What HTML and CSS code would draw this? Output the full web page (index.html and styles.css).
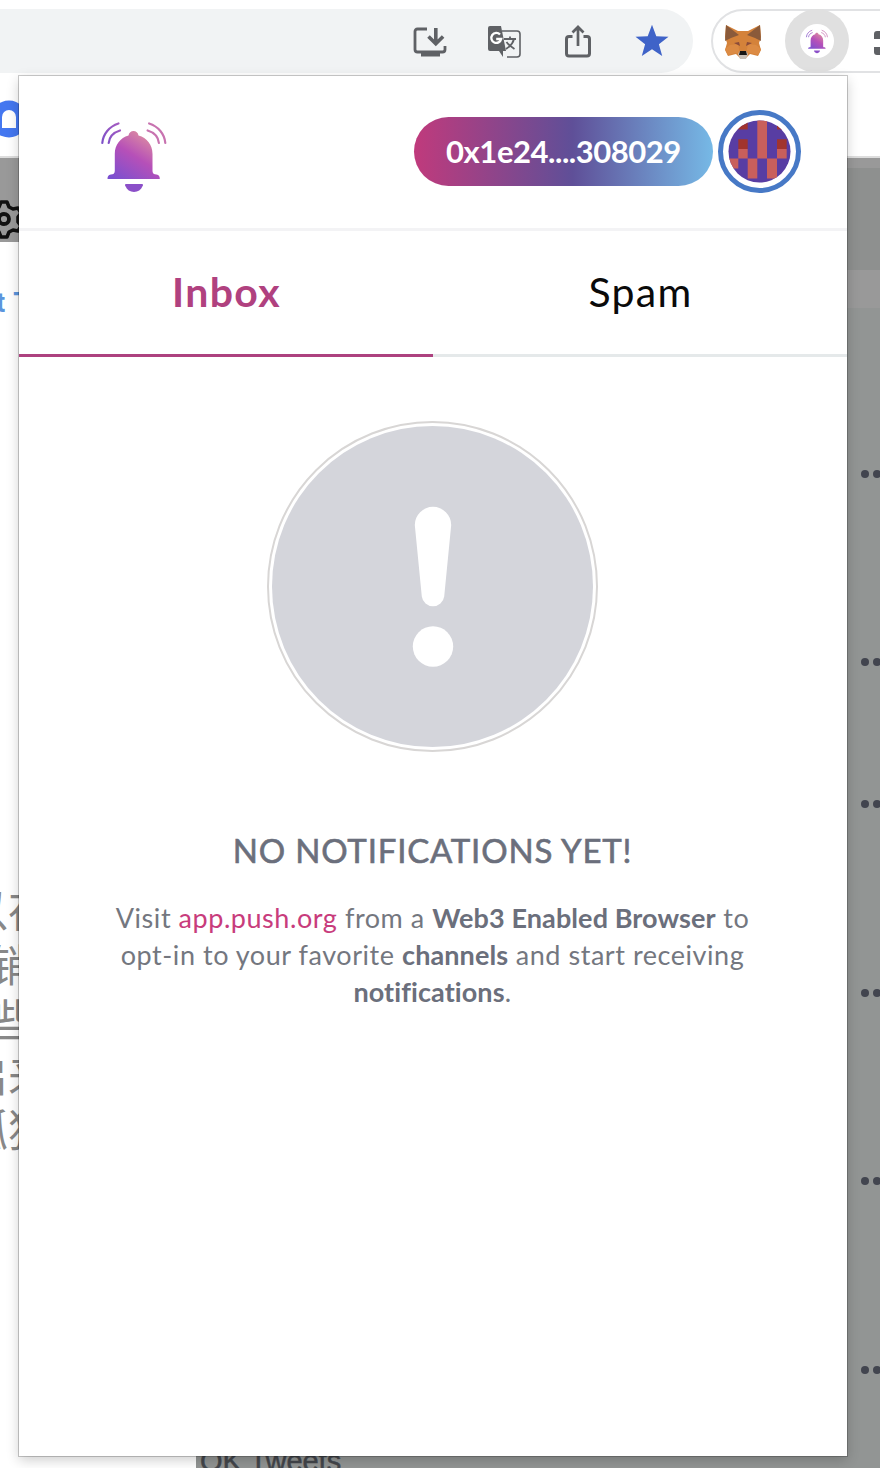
FILE: index.html
```html
<!DOCTYPE html>
<html lang="en">
  <head>
    <meta charset="utf-8">
    <title>Push notifications</title>
    <link rel="stylesheet" href="styles.css">
  </head>
  <body>
    <!-- shared drawings -->
    <svg class="defs" width="0" height="0">
      <defs>
        <linearGradient id="bell-fill" x1="35" y1="80" x2="68" y2="28" gradientUnits="userSpaceOnUse">
          <stop offset="0" stop-color="#7a4fd0"/>
          <stop offset=".5" stop-color="#b650b8"/>
          <stop offset="1" stop-color="#e59a9c"/>
        </linearGradient>
        <linearGradient id="bell-left" x1="20" y1="40" x2="40" y2="22" gradientUnits="userSpaceOnUse">
          <stop offset="0" stop-color="#7d50c8"/>
          <stop offset="1" stop-color="#a75cc0"/>
        </linearGradient>
        <symbol id="bell" viewBox="18 20 72 74">
          <path fill="url(#bell-fill)" d="M48.500 35.500C49 32.500 51 31 53.500 31s4.500 1.500 5 4.500C67 38 72.500 44.500 72.500 54v17c0 2.500 1.500 3.500 4 3.500 2.500.500 3.300 2 3.300 4.500H27.500c0-2.500.8-4 3.300-4.500 2.500 0 4-1 4-3.500V54c0-9.500 5.500-16 13.700-18.500z"/>
          <path fill="#8b4fc8" d="M46 84h16c1 0 1.200.8.8 1.800C61 90 58 92 54 92s-7-2-8.800-6.200c-.4-1-.2-1.800.8-1.800z"/>
          <g fill="none" stroke-width="2.200" stroke-linecap="round">
            <path stroke="url(#bell-left)" d="M22.300 43c.7-9 7-16.500 16.200-19.500M28.700 43c.6-6 4.800-10.500 11.300-12.500"/>
            <path stroke="#c873b0" d="M85.300 43c-.7-9-7-16.500-16.200-19.500M78.900 43c-.6-6-4.800-10.500-11.300-12.500"/>
          </g>
        </symbol>
      </defs>
    </svg>

    <div class="toolbar">
      <div class="address">
        <svg class="icon" viewBox="0 0 36 36">
          <path d="M15 5H5.500Q3 5 3 7.500v18Q3 28 5.500 28h25q2.500 0 2.500-2.500V22" fill="none" stroke="#5f6165" stroke-width="2.800"/>
          <path d="M9 28h19v4.500H9z" fill="#5f6165"/>
          <path d="M23.800 4v15M16.500 12.500l7.300 7.300 7.300-7.300" fill="none" stroke="#5f6165" stroke-width="3.600"/>
        </svg>
        <svg class="icon" viewBox="0 0 36 36">
          <path d="M16 7h15q3 0 3 3v20q0 3-3 3H21" fill="#f1f3f4" stroke="#5f6165" stroke-width="1.600"/>
          <path d="M4 2h11l5 25h-3v6l-4-6H4q-2 0-2-2V4q0-2 2-2z" fill="#5f6165"/>
          <path d="M14 10.500a5 5 0 1 0 1.200 4.500h-5" fill="none" stroke="#fff" stroke-width="2.300"/>
          <path d="M18 15h12M24 12.500V15M28 15c-1 5-5 8-8 10M20.500 18c2 3 5 5 8 7" fill="none" stroke="#5f6165" stroke-width="1.800"/>
        </svg>
        <svg class="icon" viewBox="0 0 36 36">
          <path d="M12.500 12.500H9q-2.500 0-2.500 2.500v14.500Q6.500 32 9 32h18q2.500 0 2.500-2.500V15q0-2.500-2.500-2.500h-3.500" fill="none" stroke="#5f6165" stroke-width="3"/>
          <path d="M18 22V3.500M12.500 8.500L18 3l5.500 5.500" fill="none" stroke="#5f6165" stroke-width="2.700"/>
        </svg>
        <svg class="icon" viewBox="0 0 36 36">
          <path d="M18 .8l4.300 11.400 12.200.5-9.600 7.500 3.300 11.900L18 25.300 7.800 32.100l3.300-11.900-9.600-7.500 12.200-.5z" fill="#3f63c8"/>
        </svg>
      </div>

      <div class="extensions">
        <svg class="fox" viewBox="0 0 40 40">
          <path d="M3 4l12 6h10l12-6 1 12-2 6 2 7-3 6-8-2-4 4h-6l-4-4-8 2-3-6 2-7-2-6z" fill="#d4823a"/>
          <path d="M3 4l13 10-8 3-6 3zM37 4L24 14l8 3 6 3z" fill="#8a5a3a"/>
          <path d="M7 24l8-1 2 10-4-1-8 2-3-6zM33 24l-8-1-2 10 4-1 8 2 3-6z" fill="#dc8b44"/>
          <path d="M11 22l5-1 1 4zM29 22l-5-1-1 4z" fill="#8a4b3a"/>
          <path d="M15 33l2-3h6l2 3-2 5h-6z" fill="#c9bfb6"/>
          <path d="M17 30h6l1 4h-8z" fill="#191614"/>
        </svg>
        <span class="active">
          <span class="badge"><svg width="24" height="25"><use href="#bell"/></svg></span>
        </span>
        <svg class="puzzle" width="20" height="30" viewBox="0 0 20 30">
          <path d="M3 2h17v8H0V5q0-3 3-3zM0 18h20v8H3q-3 0-3-3z" fill="#5f6165"/>
        </svg>
      </div>
    </div>

    <div class="page">
      <div class="page-head">
        <svg width="30" height="40" viewBox="0 0 30 40">
          <circle cx="9" cy="20" r="18.500" fill="#4477f0"/>
          <path d="M2 29V18a7 7 0 0 1 14 0v11z" fill="#fff"/>
        </svg>
      </div>
      <div class="page-body">
        <div class="side">
          <div class="side-bar">
            <svg width="30" height="44" viewBox="0 0 30 44">
              <path d="M1 4h6l2 5 4 2 5-1 3 5-3 4v5l3 4-3 5-5-1-4 2-2 5H1l-2-5-4-2V12l4-3z" fill="#999" stroke="#111" stroke-width="3.500" stroke-linejoin="round"/>
              <circle cx="4" cy="21" r="5" fill="none" stroke="#111" stroke-width="3.800"/>
            </svg>
          </div>
          <div class="side-link">t Tw</div>
          <div class="zh">
            <p>以存</p>
            <p class="in">销</p>
            <p class="some">些</p>
            <p>启来</p>
            <p>孤独</p>
          </div>
        </div>
        <div class="feed">
          <div class="band light"></div>
          <div class="band dark"></div>
          <div class="band gap"></div>
          <div class="rows">
            <div class="row first"><i></i><i></i></div>
            <div class="row"><i></i><i></i></div>
            <div class="row short"><i></i><i></i></div>
            <div class="row"><i></i><i></i></div>
            <div class="row"><i></i><i></i></div>
            <div class="row"><i></i><i></i></div>
          </div>
          <div class="tweets">OK Tweets</div>
        </div>
      </div>
    </div>

    <main class="popup">
      <header>
        <svg class="logo" width="72" height="74"><use href="#bell"/></svg>
        <div class="wallet">0x1e24....308029</div>
        <div class="avatar">
          <svg width="63" height="63" viewBox="0 0 63 63">
            <clipPath id="round"><circle cx="31.500" cy="31.500" r="31"/></clipPath>
            <g clip-path="url(#round)">
              <path d="M0 0h63v63H0z" fill="#583da3"/>
              <path d="M29.300 0H39v38.500h-9.700zM10.300 29h9.400v9.500h-9.400zM49 29h9.700v9.500H49zM0 38.500h10.300v10H0zM19.700 38.500h9.600v20h-9.600zM39 38.500h10v20H39z" fill="#c95f5c"/>
              <path d="M10.300 0h9.400v9.500h-9.400zM49 0h9.700v9.500H49zM10.300 19.300h9.400V29h-9.400zM49 19.300h9.700V29H49z" fill="#a1342e"/>
            </g>
          </svg>
        </div>
      </header>

      <nav>
        <a class="tab active-tab"><span>Inbox</span></a>
        <a class="tab"><span>Spam</span></a>
      </nav>

      <section class="empty">
        <div class="mark">
          <svg width="60" height="180" viewBox="0 0 60 180">
            <path d="M11.800 28a18.200 18.200 0 0 1 36.400 0l-7 71.500a11.300 11.300 0 0 1-22.400 0z" fill="#fff"/>
            <circle cx="30" cy="149.500" r="20.200" fill="#fff"/>
          </svg>
        </div>
        <h1>NO NOTIFICATIONS YET!</h1>
        <p>Visit <a>app.push.org</a> from a <b>Web3 Enabled Browser</b> to</p>
        <p>opt-in to your favorite <b>channels</b> and start receiving</p>
        <p><b>notifications</b>.</p>
      </section>
    </main>
  </body>
</html>
```

FILE: styles.css
```css
* {
  box-sizing: border-box;
}

html, body {
  margin: 0;
  width: 880px;
  height: 1468px;
  overflow: hidden;
  background: #fff;
  font-family: Lato, sans-serif;
}

body {
  position: relative;
}

svg {
  display: block;
  flex: none;
}

.defs {
  position: absolute;
}

/* browser toolbar */
.toolbar {
  display: flex;
  height: 74px;
  padding-top: 9px;
  gap: 18px;
  overflow: hidden;
}

.address {
  display: flex;
  flex: none;
  align-items: center;
  justify-content: flex-end;
  gap: 38px;
  width: 693px;
  height: 64px;
  padding: 2px 23px 0 0;
  border-radius: 0 32px 32px 0;
  background: #f1f3f4;
}

.icon {
  width: 36px;
  height: 36px;
}

.extensions {
  display: flex;
  flex: none;
  align-items: center;
  width: 220px;
  height: 64px;
  padding-left: 10px;
  border: 2px solid #e1e2e4;
  border-radius: 32px;
}

.fox {
  width: 40px;
  height: 40px;
}

.active {
  display: flex;
  flex: none;
  align-items: center;
  justify-content: center;
  width: 64px;
  height: 64px;
  margin: 0 25px 0 22px;
  border-radius: 50%;
  background: #e0e0e0;
}

.badge {
  display: flex;
  align-items: center;
  justify-content: center;
  width: 34px;
  height: 34px;
  border-radius: 50%;
  background: #fff;
}

.puzzle {
  margin-top: 6px;
}

/* page under the popup */
.page-head {
  height: 84px;
  padding-top: 25px;
  border-bottom: 2px solid #ddd;
}

.page-body {
  display: grid;
  grid-template-columns: 196px 684px;
  height: 1310px;
}

.side {
  overflow: hidden;
}

.side-bar {
  height: 84px;
  padding-top: 40px;
  background: #999;
}

.side-link {
  margin: 43px 0 0 -4px;
  color: #5b95dd;
  font: bold 27px/36px Roboto, sans-serif;
  word-spacing: 2px;
}

.zh {
  margin: 560px 0 0 -36px;
  color: #888;
  font: 44px/55px "Noto Sans CJK SC", sans-serif;
}

.zh p {
  margin: 0;
}

.zh .in {
  padding-left: 26px;
}

.zh .some {
  padding-left: 28px;
}

.feed {
  overflow: hidden;
  background: #929594;
}

.band.light {
  height: 10px;
  background: #999;
}

.band.dark {
  height: 102px;
  background: #8e908f;
}

.band.gap {
  height: 38px;
  background: #999;
}

.row {
  display: flex;
  align-items: flex-end;
  gap: 4px;
  height: 188.6px;
  padding-left: 665px;
  overflow: hidden;
}

.row.first {
  height: 169.5px;
}

.row.short {
  height: 142px;
}

.row i {
  flex: none;
  width: 8px;
  height: 8px;
  border-radius: 50%;
  background: #42454f;
}

.tweets {
  margin: 71px 0 0 4px;
  color: #43464b;
  font: 29px/32px "Liberation Sans", sans-serif;
  white-space: nowrap;
  -webkit-text-stroke: .5px;
}

/* popup */
.popup {
  position: absolute;
  left: 19px;
  top: 76px;
  width: 828px;
  height: 1379.5px;
  background: #fff;
  box-shadow: 0 0 0 1px #0003, 0 4px 12px #0003;
}

header {
  display: flex;
  align-items: center;
  height: 155px;
  padding: 0 46px 2px 79px;
  border-bottom: 3px solid #f3f3f5;
}

.logo {
  margin-top: 11px;
}

.wallet {
  width: 299px;
  height: 69px;
  margin-left: auto;
  border-radius: 35px;
  background: linear-gradient(90deg, #c03a7c, #5f4f98 53%, #76b9e6);
  color: #fff;
  font-size: 31px;
  font-weight: bold;
  line-height: 69px;
  letter-spacing: -.45px;
  text-align: center;
}

.avatar {
  display: flex;
  align-items: center;
  justify-content: center;
  width: 83px;
  height: 83px;
  margin-left: 5px;
  border: 5px solid #4779c6;
  border-radius: 50%;
}

nav {
  display: flex;
}

.tab {
  flex: 1;
  height: 126px;
  border-bottom: 3px solid #e5e9ea;
  color: #0a0a0a;
  font-size: 41px;
  line-height: 122px;
  letter-spacing: 1.3px;
  text-align: center;
}

.tab span {
  padding-left: 1px;
}

.active-tab {
  border-color: #ad417f;
  color: #b0417f;
  font-weight: bold;
}

.empty {
  display: flex;
  flex-direction: column;
  align-items: center;
  padding: 64px 1px 0 0;
}

.mark {
  display: flex;
  align-items: center;
  justify-content: center;
  width: 331px;
  height: 331px;
  padding: 3px;
  border: 2px solid #d8d6d5;
  border-radius: 50%;
  background: #d4d5db content-box;
  background-clip: content-box;
}

h1 {
  margin: 77px 0 28px;
  color: #6b6f7c;
  font-size: 33px;
  font-weight: normal;
  line-height: 42px;
  letter-spacing: .8px;
  -webkit-text-stroke: .6px;
}

.empty p {
  margin: 0;
  color: #74777f;
  font-size: 27px;
  line-height: 37px;
  letter-spacing: .55px;
  white-space: nowrap;
}

.empty p a {
  color: #c83c7c;
}

.empty p b {
  color: #6b6f7c;
  letter-spacing: .1px;
}
```
